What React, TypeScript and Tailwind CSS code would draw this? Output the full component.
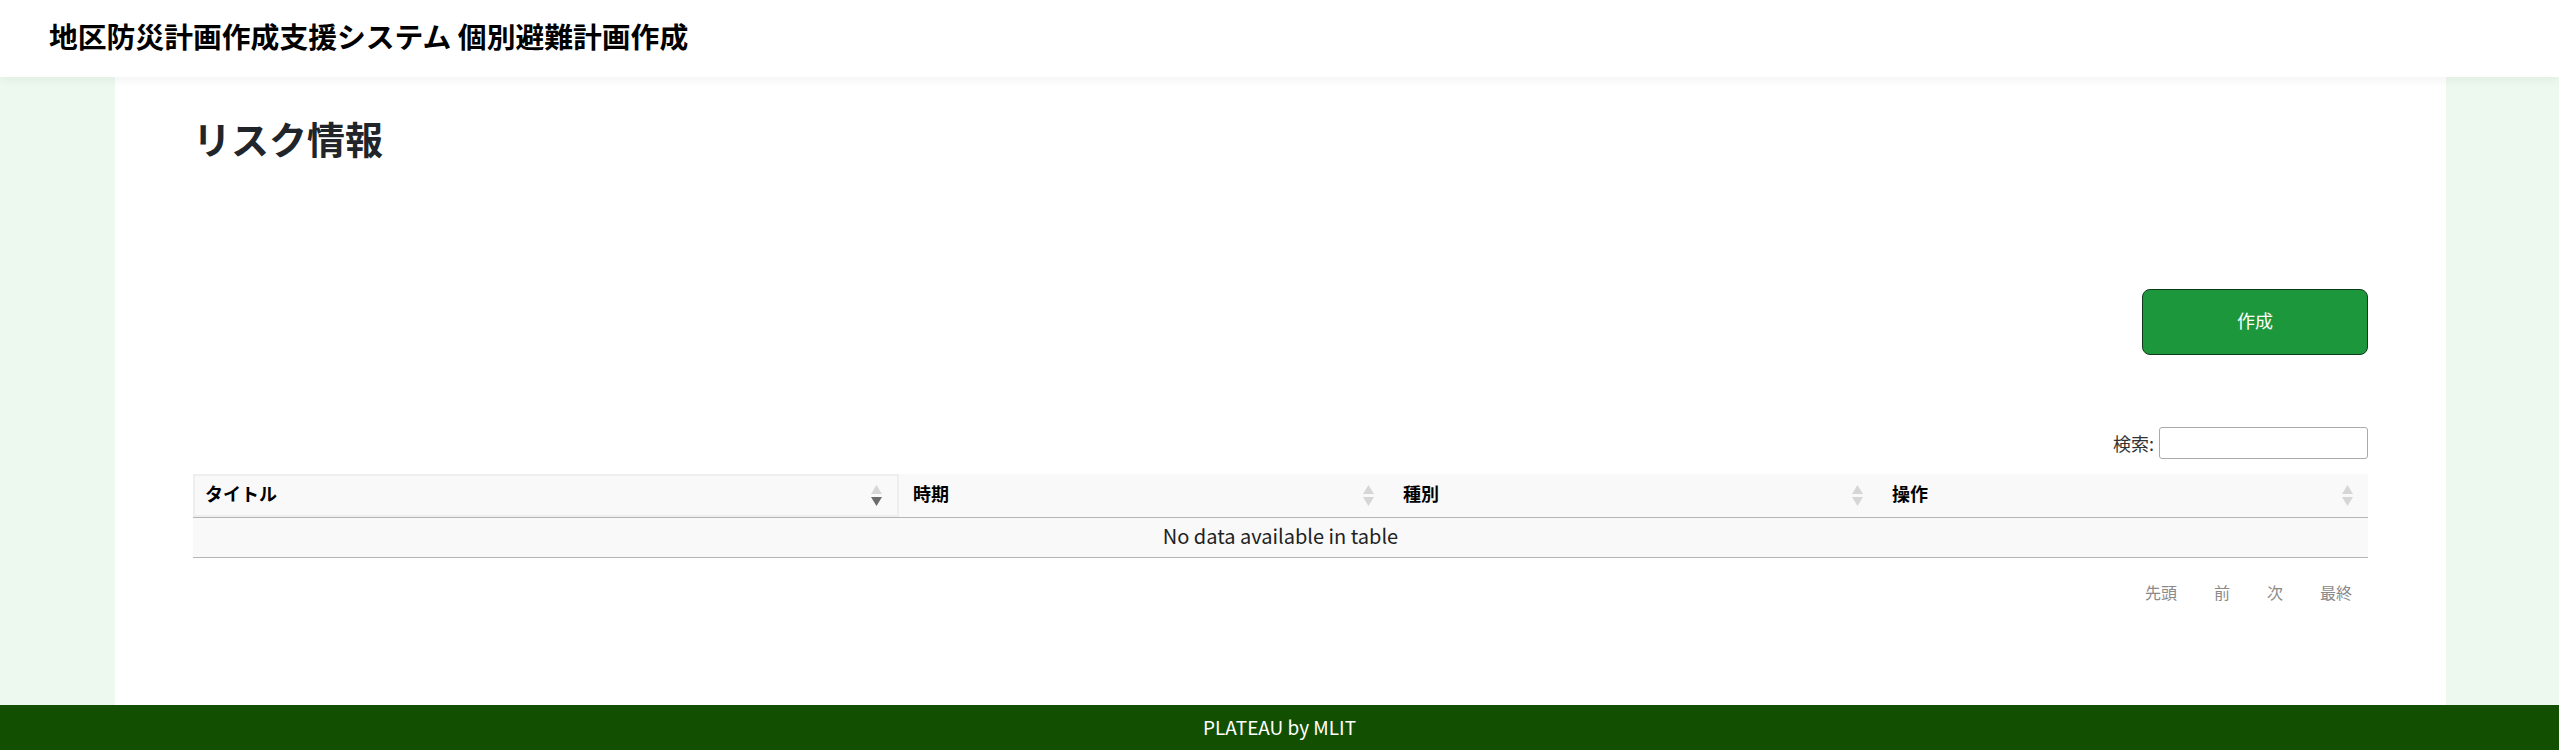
import React from "react";

const FONT = { fontFamily: '"Noto Sans CJK JP", "Noto Sans", sans-serif' };

function SortIcon({ active }: { active?: boolean }) {
  return (
    <svg width="11" height="21" viewBox="0 0 11 21" className="shrink-0">
      <polygon points="5.5,0 11,9 0,9" fill="#d6d6d6" />
      <polygon points="0,12 11,12 5.5,21" fill={active ? "#6b6b6b" : "#d6d6d6"} />
    </svg>
  );
}

const columns = [
  { label: "タイトル", active: true },
  { label: "時期" },
  { label: "種別" },
  { label: "操作" },
];

export default function App() {
  return (
    <div className="min-h-screen flex flex-col bg-[#edf8ef] text-[#212529]" style={FONT}>
      {/* header */}
      <header className="relative z-10 h-[77px] bg-white flex items-center px-[49px] pb-[5px] shadow-[0_3px_10px_rgba(0,0,0,0.05)]">
        <h1 className="text-[28.8px] font-bold text-black">
          地区防災計画作成支援システム 個別避難計画作成
        </h1>
      </header>

      {/* main */}
      <main className="flex-1 flex">
        <div className="w-[2331px] ml-[115px] bg-white px-[78px] pt-[39px]">
          <h2 className="text-[38px] leading-[44px] font-bold">リスク情報</h2>

          <div className="flex justify-end mt-[129px]">
            <button className="w-[226px] h-[66px] pb-[4px] rounded-[8px] bg-[#1d973c] border border-[#103a1c] text-white text-[18px]">
              作成
            </button>
          </div>

          <div className="flex justify-end items-center mt-[72px] text-[18px] text-[#333]">
            <label className="mr-[5px]">検索:</label>
            <input
              type="text"
              className="w-[209px] h-[32px] border border-[#aaa] rounded-[3px] bg-white"
            />
          </div>

          {/* table */}
          <div className="mt-[15px]">
            <div className="grid grid-cols-[706px_490px_489px_1fr] bg-[#f9f9f9] border-b border-[#b5b5b5] h-[44px]">
              {columns.map((c) => (
                <div
                  key={c.label}
                  className={`flex items-center justify-between text-[18px] font-bold text-black pr-[15px] ${
                    c.active ? "border-2 border-[#eeeeee] pl-[10px]" : "pl-[14px]"
                  }`}
                >
                  <span className="pb-[4px]">{c.label}</span>
                  <SortIcon active={c.active} />
                </div>
              ))}
            </div>
            <div className="h-[40px] pb-[3px] bg-[#f9f9f9] border-b border-[#b5b5b5] flex items-center justify-center text-[20px] text-[#222]">
              No data available in table
            </div>
          </div>

          {/* pagination */}
          <div className="flex justify-end gap-[37px] mt-[22px] pr-[16px] text-[16px] leading-[24px] text-[#8a8a8a]">
            <span>先頭</span>
            <span>前</span>
            <span>次</span>
            <span>最終</span>
          </div>
        </div>
      </main>

      {/* footer */}
      <footer className="h-[45px] bg-[#134f00] flex items-center justify-center text-white text-[19px]">
        PLATEAU by MLIT
      </footer>
    </div>
  );
}
